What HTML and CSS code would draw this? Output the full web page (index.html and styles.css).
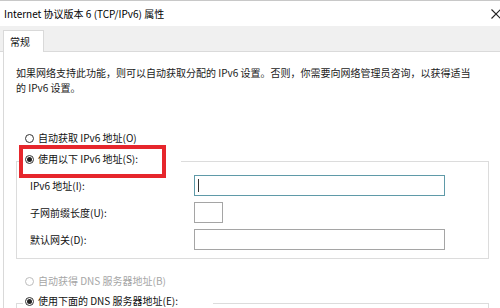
FILE: index.html
```html
<!DOCTYPE html>
<html lang="zh-CN">
<head>
<meta charset="utf-8">
<link rel="stylesheet" href="styles.css">
</head>
<body>
<div class="window">
  <div class="titlebar">
    <span class="title">Internet 协议版本 6 (TCP/IPv6) 属性</span>
    <svg class="close" width="10" height="10" viewBox="0 0 10 10"><path d="M0.5 0.5 L9.5 9.5 M9.5 0.5 L0.5 9.5" stroke="#222" stroke-width="1.1" fill="none"/></svg>
  </div>
  <div class="tabs"><div class="tab">常规</div></div>
  <div class="panel">
    <p class="desc">如果网络支持此功能，则可以自动获取分配的 IPv6 设置。否则，你需要向网络管理员咨询，以获得适当<br>的 IPv6 设置。</p>
    <div class="radio first"><span class="circle"></span><span>自动获取 IPv6 地址(O)</span></div>
    <fieldset class="group">
      <legend class="legend"><div class="radio"><span class="circle checked"></span><span>使用以下 IPv6 地址(S):</span></div></legend>
      <div class="row"><span class="lbl">IPv6 地址(I):</span><span class="input wide focus"><i class="caret"></i></span></div>
      <div class="row"><span class="lbl">子网前缀长度(U):</span><span class="input small"></span></div>
      <div class="row"><span class="lbl">默认网关(D):</span><span class="input wide"></span></div>
    </fieldset>
    <div class="radio disabled dns-auto"><span class="circle"></span><span>自动获得 DNS 服务器地址(B)</span></div>
    <fieldset class="group dns">
      <legend class="legend"><div class="radio"><span class="circle checked"></span><span>使用下面的 DNS 服务器地址(E):</span></div></legend>
    </fieldset>
  </div>
  <div class="highlight"></div>
</div>
</body>
</html>
```
FILE: styles.css
```css
html, body {
  margin: 0;
  padding: 0;
  background: #fff;
}
body {
  width: 500px;
  height: 308px;
  overflow: hidden;
  font-family: "Noto Sans CJK SC", "Noto Sans", sans-serif;
  font-size: 10px;
  color: #111;
}
.window {
  position: relative;
  border-top: 1px solid #c8c8c8;
}
.titlebar {
  height: 25px;
  display: flex;
  align-items: center;
  justify-content: space-between;
  padding: 0 0 0 4px;
  background: #fff;
}
.title {
  color: #000;
}
.close {
  position: relative;
  left: 1px;
}
.tabs {
  background: #f0f0f0;
  height: 26px;
  padding-left: 3px;
  display: flex;
  align-items: flex-end;
  box-sizing: border-box;
  border-bottom: 1px solid #dadada;
}
.tab {
  width: 41px;
  height: 22px;
  box-sizing: border-box;
  background: #fff;
  border: 1px solid #d9d9d9;
  border-bottom: none;
  margin-bottom: -1px;
  padding: 3px 0 0 6px;
}
.panel {
  border-left: 1px solid #d9d9d9;
  margin-left: 3px;
  padding: 13px 11px 0 12px;
  background: #fff;
  height: 260px;
}
.desc {
  margin: 0;
  line-height: 15px;
  color: #1a1a1a;
}
.radio {
  display: flex;
  align-items: center;
  height: 16px;
  line-height: 16px;
  gap: 4px;
  white-space: nowrap;
}
.radio.first {
  margin-top: 35px;
  padding-left: 9px;
}
.circle {
  width: 9px;
  height: 9px;
  border: 1px solid #333;
  border-radius: 50%;
  box-sizing: border-box;
  display: inline-flex;
  align-items: center;
  justify-content: center;
  background: #fff;
  flex: none;
}
.circle.checked::after {
  content: "";
  width: 5px;
  height: 5px;
  border-radius: 50%;
  background: #222;
}
.radio.disabled {
  color: #a6a6a6;
}
.radio.disabled .circle {
  border-color: #bdbdbd;
}
.group {
  margin: 5px 0 0 0;
  padding: 0 0 8px 13px;
  border: 1px solid #dcdcdc;
  min-width: 0;
}
.legend {
  width: 158px;
  padding: 0 0 4px 2px;
  margin-left: -7px;
  box-sizing: border-box;
}
.row {
  display: flex;
  align-items: center;
  height: 21px;
  margin-top: 6px;
}
.row:first-of-type {
  margin-top: 4px;
}
.lbl {
  width: 164px;
  flex: none;
}
.input {
  display: block;
  height: 21px;
  box-sizing: border-box;
  border: 1px solid #a5a5a5;
  background: #fff;
  position: relative;
}
.input.wide {
  width: 251px;
}
.input.small {
  width: 29px;
}
.input.focus {
  border-color: #5f9aa8;
}
.caret {
  position: absolute;
  left: 3px;
  top: 3px;
  width: 1px;
  height: 13px;
  background: #333;
}
.dns-auto {
  margin-top: 14px;
  padding-left: 9px;
}
.group.dns {
  margin-top: 4px;
  height: 40px;
}
.group.dns .legend {
  width: 190px;
}
.highlight {
  position: absolute;
  left: 19px;
  top: 144px;
  width: 147px;
  height: 33px;
  box-sizing: border-box;
  border: 4px solid #e6262c;
}
```
